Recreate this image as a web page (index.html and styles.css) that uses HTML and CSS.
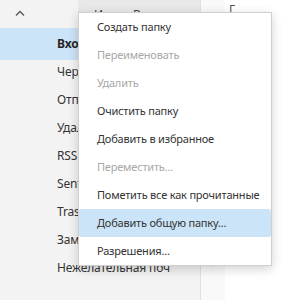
FILE: index.html
```html
<!DOCTYPE html>
<html lang="ru">
<head>
<meta charset="utf-8">
<link rel="stylesheet" href="styles.css">
</head>
<body>
<div class="app">
  <nav class="nav">
    <div class="top">
      <div class="chev-cell">
        <svg class="chev" width="10" height="6" viewBox="0 0 10 6"><path d="M1 5.5 L5 1.5 L9 5.5" fill="none" stroke="#555" stroke-width="1.3"/></svg>
      </div>
      <div class="hdr"><span>Из</span><span>В</span></div>
    </div>
    <ul class="folders">
      <li class="sel"><span class="name">Входящие</span></li>
      <li><span class="name">Черновики</span></li>
      <li><span class="name">Отправленные</span></li>
      <li><span class="name">Удаленные</span></li>
      <li><span class="name">RSS Feeds</span></li>
      <li><span class="name">Sent Items</span></li>
      <li><span class="name">Trash</span></li>
      <li><span class="name">Заметки</span></li>
      <li><span class="name">Нежелательная почта</span></li>
    </ul>
  </nav>
  <div class="mid">
    <svg class="arrow" width="6" height="8" viewBox="0 0 6 8"><path d="M1 0.5 L5 4 L1 7.5 Z" fill="#444"/></svg>
  </div>
  <div class="reading">
    <div class="rtop">Г</div>
  </div>
</div>
<ul class="menu">
  <li>Создать папку</li>
  <li class="dis">Переименовать</li>
  <li class="dis">Удалить</li>
  <li>Очистить папку</li>
  <li>Добавить в избранное</li>
  <li class="dis">Переместить...</li>
  <li>Пометить все как прочитанные</li>
  <li class="hi">Добавить общую папку...</li>
  <li>Разрешения...</li>
</ul>
</body>
</html>
```
FILE: styles.css
```css
html, body {
  margin: 0;
  padding: 0;
  width: 288px;
  height: 300px;
  overflow: hidden;
  background: #fff;
  font-family: "Noto Sans", "Open Sans", sans-serif;
  color: #333;
}
.app {
  display: flex;
  height: 300px;
}
.nav {
  width: 200px;
  flex: none;
  background: #f3f3f3;
  border-right: 1px solid #e0e0e0;
}
.top {
  display: flex;
  height: 30px;
}
.chev-cell {
  width: 78px;
  flex: none;
  display: flex;
  padding: 10px 0 0 15px;
  box-sizing: border-box;
}
.hdr {
  flex: 1;
  height: 12px;
  background: #e8e8e8;
  display: flex;
  gap: 24px;
  padding-left: 16px;
  font-size: 12px;
  line-height: 30px;
  overflow: hidden;
  color: #444;
}
.folders {
  list-style: none;
  margin: 0;
  padding: 0;
  font-size: 12px;
  letter-spacing: -0.15px;
}
.folders li {
  height: 28px;
  line-height: 28px;
  padding-left: 57px;
  padding-right: 28px;
  white-space: nowrap;
}
.folders .name {
  display: block;
  overflow: hidden;
}
.folders li.sel {
  height: 32px;
  line-height: 32px;
  margin-top: -2px;
  margin-bottom: -2px;
  background: #cce4f7;
  font-weight: bold;
  color: #262626;
}
.mid {
  width: 24px;
  flex: none;
  background: #f9f9f9;
  display: flex;
  flex-direction: column;
  justify-content: flex-end;
  align-items: center;
  padding-bottom: 33px;
  box-sizing: border-box;
}
.reading {
  flex: 1;
  background: #fff;
}
.rtop {
  font-size: 12px;
  color: #555;
  line-height: 12px;
  padding: 4px 0 0 4px;
  height: 8px;
  overflow: hidden;
}
.menu {
  position: absolute;
  left: 78px;
  top: 12px;
  width: 192px;
  margin: 0;
  padding: 0;
  list-style: none;
  background: #fff;
  border: 1px solid #cfcfcf;
  box-shadow: 0 3px 10px rgba(0,0,0,0.18);
  font-size: 11px;
  letter-spacing: -0.2px;
  color: #333;
}
.menu li {
  height: 28px;
  line-height: 28px;
  padding-left: 18px;
  white-space: nowrap;
  border-radius: 2px;
}
.menu li.dis {
  color: #a8a8a8;
}
.menu li.hi {
  background: #cce4f7;
}
```
